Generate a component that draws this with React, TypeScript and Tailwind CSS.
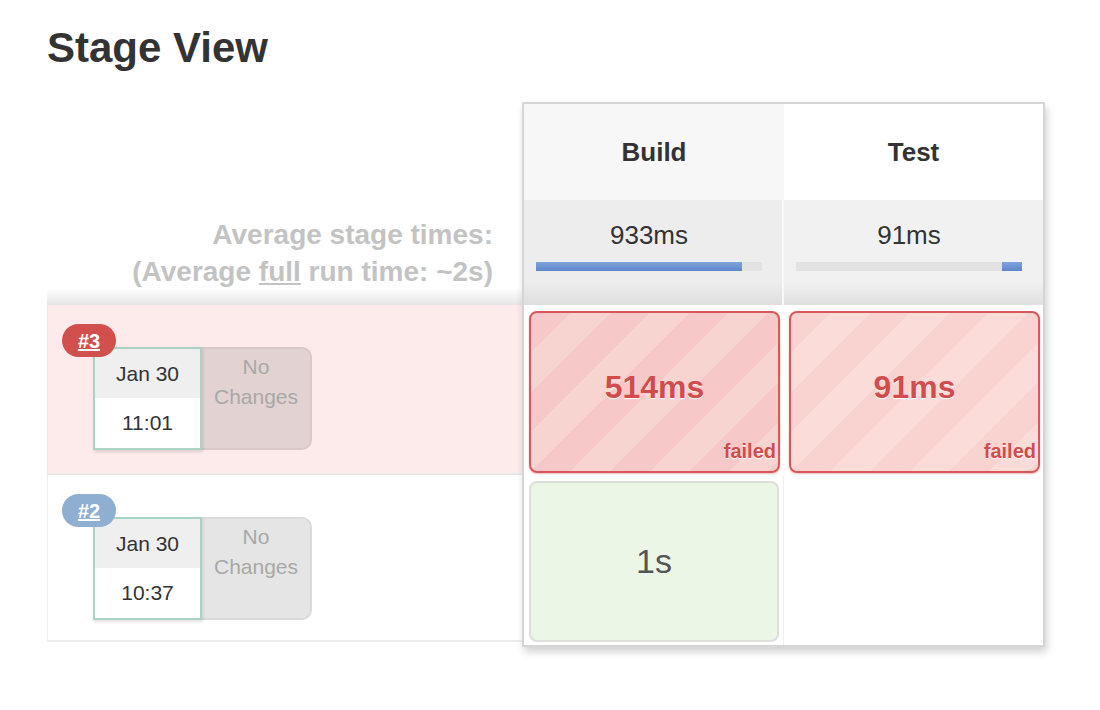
import React from "react";

type Run = {
  id: string;
  date: string;
  time: string;
  failed: boolean;
};

const runs: Run[] = [
  { id: "#3", date: "Jan 30", time: "11:01", failed: true },
  { id: "#2", date: "Jan 30", time: "10:37", failed: false },
];

function RunLabel({ run }: { run: Run }) {
  return (
    <div className="relative pl-[45px] pt-[42px]">
      <span
        className={
          "absolute left-[14px] top-[19px] z-10 flex h-[33px] w-[54px] items-center justify-center rounded-full text-[20px] font-bold text-white underline " +
          (run.failed ? "bg-[#d14f4c]" : "bg-[#8eaed2]")
        }
      >
        {run.id}
      </span>
      <div className="flex">
        <div className="flex h-[103px] w-[109px] flex-col border-2 border-[#aad3c4] bg-white text-[21px] text-[#333] shadow-[1px_2px_3px_rgba(0,0,0,0.12)]">
          <div className="flex h-[49px] items-center justify-center bg-[#efefef]">{run.date}</div>
          <div className="flex flex-1 items-center justify-center">{run.time}</div>
        </div>
        <div className="h-[103px] w-[110px] rounded-r-[10px] border-2 border-l-0 border-black/5 bg-black/10 pt-[3px] text-center text-[21px] leading-[30px] text-[#a8a8a8]">
          No
          <br />
          Changes
        </div>
      </div>
    </div>
  );
}

function FailedCell({ time, light }: { time: string; light?: boolean }) {
  return (
    <div
      className={
        "flex h-full flex-col rounded-[8px] border-2 border-[#d9575a] shadow-[0_1px_2px_rgba(200,60,60,0.35)] " +
        (light
          ? "bg-[image:repeating-linear-gradient(135deg,#f9d3d0_0px,#f9d3d0_28px,#fbdcd9_28px,#fbdcd9_56px)]"
          : "bg-[image:repeating-linear-gradient(135deg,#f6c9c8_0px,#f6c9c8_28px,#f8d4d1_28px,#f8d4d1_56px)]")
      }
    >
      <div className="flex flex-1 items-center justify-center pt-[20px] text-[32px] font-bold text-[#d14c4c] [text-shadow:0_1px_1px_#fff]">
        {time}
      </div>
      <div className="pb-[9px] pr-[2px] text-right text-[20px] font-bold leading-[22px] text-[#d14c4c] [text-shadow:0_1px_1px_#fff]">
        failed
      </div>
    </div>
  );
}

function Bar({ fill, right }: { fill: number; right?: boolean }) {
  return (
    <div className={"mt-[11px] flex h-[9px] w-[226px] bg-[#e2e2e2] " + (right ? "justify-end" : "")}>
      <div
        className="h-full bg-[linear-gradient(to_bottom,#7ea3dd,#5f86c9)]"
        style={{ width: fill + "px" }}
      />
    </div>
  );
}

export default function App() {
  return (
    <div className="min-h-[710px] bg-white pl-[47px] pt-[24px] font-['Liberation_Sans',Arial,sans-serif] text-[#333]">
      <h1 className="text-[42px] font-bold leading-[48px] text-[#333]">Stage View</h1>

      <div className="mt-[30px] flex items-start">
        {/* left column */}
        <div className="w-[475px]">
          <div className="h-[98px]" />
          <div className="h-[105px] bg-[linear-gradient(to_bottom,#fff_84%,#e6e6e6)] pr-[29px] pt-[16px] text-right text-[28px] font-bold leading-[37px] text-[#c3c3c3]">
            Average stage times:
            <br />
            (Average <span className="underline">full</span> run time: ~2s)
          </div>
          <div className="h-[170px] border-b-2 border-l border-[#e9e9e9] bg-[#fdeaea]">
            <RunLabel run={runs[0]} />
          </div>
          <div className="h-[167px] border-b-2 border-l border-[#ededed] bg-white">
            <RunLabel run={runs[1]} />
          </div>
        </div>

        {/* stage table */}
        <div className="w-[523px] border-2 border-[#d5d5d5] bg-white shadow-[2px_5px_8px_rgba(0,0,0,0.18)]">
          <div className="flex h-[96px] text-[26px] font-bold text-[#333]">
            <div className="flex w-[260px] items-center justify-center bg-[#f7f7f7]">Build</div>
            <div className="flex flex-1 items-center justify-center bg-white">Test</div>
          </div>

          <div className="flex h-[105px] text-[26px] text-[#333]">
            <div className="flex w-[258px] flex-col bg-[linear-gradient(to_bottom,#ededed_78%,#dedede)] pl-[12px] pt-[19px]">
              <div className="w-[226px] text-center leading-[32px]">933ms</div>
              <Bar fill={206} />
            </div>
            <div className="w-[2px] bg-[#f8f8f8]" />
            <div className="flex flex-1 flex-col bg-[linear-gradient(to_bottom,#f1f1f1_78%,#e0e0e0)] pl-[12px] pt-[19px]">
              <div className="w-[226px] text-center leading-[32px]">91ms</div>
              <Bar fill={20} right />
            </div>
          </div>

          <div className="flex h-[170px]">
            <div className="w-[260px] pb-[2px] pl-[5px] pr-[4px] pt-[6px]">
              <FailedCell time="514ms" />
            </div>
            <div className="flex-1 pb-[2px] pl-[5px] pr-[3px] pt-[6px]">
              <FailedCell time="91ms" light />
            </div>
          </div>

          <div className="flex h-[170px]">
            <div className="w-[260px] border-r border-[#f0f0f0] pb-[3px] pl-[5px] pr-[4px] pt-[6px]">
              <div className="flex h-full items-center justify-center rounded-[8px] border-2 border-[#dcdfda] bg-[#ebf6e7] text-[34px] text-[#555]">
                1s
              </div>
            </div>
            <div className="flex-1" />
          </div>
        </div>
      </div>
    </div>
  );
}
